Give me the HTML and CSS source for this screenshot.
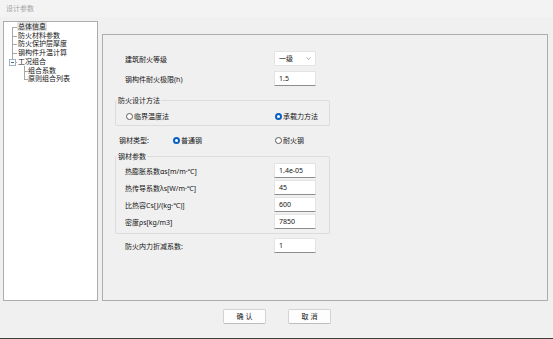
FILE: index.html
```html
<!DOCTYPE html>
<html lang="zh">
<head>
  <meta charset="UTF-8">
  <title>设计参数</title>
  <link rel="stylesheet" href="styles.css">
</head>
<body>
  <div class="window">
    <div class="title-bar">设计参数</div>

    <div class="content">
      <!-- 左侧树 -->
      <div class="tree">
        <ul class="tree-list">
          <li class="node"><span class="selected">总体信息</span></li>
          <li class="node">防火材料参数</li>
          <li class="node">防火保护层厚度</li>
          <li class="node">钢构件升温计算</li>
          <li class="node last"><span class="toggle"></span>工况组合
            <ul class="sub">
              <li class="node">组合系数</li>
              <li class="node">原则组合列表</li>
            </ul>
          </li>
        </ul>
      </div>

      <!-- 右侧参数 -->
      <div class="panel">
        <div class="row first">
          <span class="label">建筑耐火等级</span>
          <div class="field select">一级
            <svg width="5" height="3" viewBox="0 0 5 3"><path d="M0.5 0.5 L2.5 2.5 L4.5 0.5" fill="none" stroke="#8a8a8a" stroke-width="0.7"/></svg>
          </div>
        </div>
        <div class="row">
          <span class="label">钢构件耐火极限(h)</span>
          <div class="field">1.5</div>
        </div>

        <fieldset class="group method">
          <legend>防火设计方法</legend>
          <div class="radio-row">
            <label class="radio"><span class="dot"></span>临界温度法</label>
            <label class="radio"><span class="dot on"></span>承载力方法</label>
          </div>
        </fieldset>

        <div class="steel-type">
          <span class="type-label">钢材类型:</span>
          <label class="radio normal"><span class="dot on"></span>普通钢</label>
          <label class="radio"><span class="dot"></span>耐火钢</label>
        </div>

        <fieldset class="group params">
          <legend>钢材参数</legend>
          <div class="row">
            <span class="label">热膨胀系数αs[m/m·℃]</span>
            <div class="field">1.4e-05</div>
          </div>
          <div class="row">
            <span class="label">热传导系数λs[W/m·℃]</span>
            <div class="field">45</div>
          </div>
          <div class="row">
            <span class="label">比热容Cs[J/(kg·℃)]</span>
            <div class="field">600</div>
          </div>
          <div class="row">
            <span class="label">密度ρs[kg/m3]</span>
            <div class="field">7850</div>
          </div>
        </fieldset>

        <div class="row reduce">
          <span class="label">防火内力折减系数:</span>
          <div class="field">1</div>
        </div>
      </div>
    </div>

    <div class="footer">
      <button class="btn ok" type="button">确 认</button>
      <button class="btn" type="button">取 消</button>
    </div>
  </div>
</body>
</html>
```

FILE: styles.css
```css
html, body {
  margin: 0;
  padding: 0;
}
body {
  width: 553px;
  height: 339px;
  overflow: hidden;
  background: #f0f0f0;
  font-family: "Noto Sans", "Noto Sans CJK SC", sans-serif;
  font-size: 7px;
  color: #151515;
}
.window {
  height: 338px;
  border-bottom: 1px solid #3f3f3f;
  display: flex;
  flex-direction: column;
}
.title-bar {
  height: 17px;
  line-height: 17px;
  padding-left: 6px;
  color: #a3a3a3;
  background: #f3f3f3;
}
.content {
  display: flex;
  align-items: flex-end;
  padding: 4px 0 0 3px;
}

/* tree */
.tree {
  width: 95px;
  height: 280px;
  box-sizing: border-box;
  background: #fff;
  border: 1px solid #acacac;
}
.tree-list, .tree-list ul {
  list-style: none;
  margin: 0;
  padding: 0;
}
.tree-list {
  position: relative;
  padding-top: 1px;
}
.tree-list::before {
  content: '';
  position: absolute;
  left: 8px;
  top: 5px;
  height: 36px;
  border-left: 1px solid #a8a8a8;
}
.node {
  position: relative;
  padding-left: 14px;
  line-height: 8.7px;
  white-space: nowrap;
}
.node::before {
  content: '';
  position: absolute;
  left: 8px;
  top: 4px;
  width: 5px;
  border-top: 1px solid #a8a8a8;
}
.selected {
  background: #e4e4e4;
  padding: 0 1px;
  margin-left: -1px;
}
.toggle {
  position: absolute;
  left: 5px;
  top: 1px;
  width: 7px;
  height: 7px;
  box-sizing: border-box;
  border: 1px solid #9fb3c8;
  background: #fff;
  z-index: 1;
}
.toggle::after {
  content: '';
  position: absolute;
  left: 1px;
  top: 2px;
  width: 3px;
  border-top: 1px solid #4a6a8a;
}
.sub {
  position: relative;
  margin-left: -14px !important;
}
.sub::before {
  content: '';
  position: absolute;
  left: 20px;
  top: -1px;
  height: 14px;
  border-left: 1px solid #a8a8a8;
}
.sub .node {
  padding-left: 24px;
}
.sub .node::before {
  left: 20px;
  width: 4px;
}

/* right panel */
.panel {
  width: 446px;
  height: 267px;
  box-sizing: border-box;
  margin-left: 4px;
  border: 1px solid #adadad;
  padding-top: 16px;
}
.row {
  display: flex;
  align-items: center;
  height: 15px;
  padding-left: 22px;
}
.row + .row {
  margin-top: 5px;
}
.label {
  width: 149px;
  white-space: nowrap;
}
.field {
  width: 42px;
  height: 15px;
  box-sizing: border-box;
  background: #fff;
  border: 1px solid #e3e3e3;
  border-bottom-color: #8d8d8d;
  border-radius: 1px;
  padding-left: 4px;
  line-height: 13px;
}
.select {
  display: flex;
  align-items: center;
  justify-content: space-between;
  padding-right: 4px;
  border-color: #e3e3e3;
  border-bottom-color: #e3e3e3;
}

.group {
  margin: 10px 0 0 12px;
  width: 215px;
  min-width: 0;
  box-sizing: border-box;
  padding: 0;
  border: 1px solid #dcdcdc;
  border-radius: 2px;
}
.group legend {
  padding: 0 1px;
  margin-left: 1px;
  line-height: 9px;
}
.radio-row {
  display: grid;
  grid-template-columns: 149px auto;
  padding: 7px 0 4px 10px;
  line-height: 9px;
}
.radio {
  display: flex;
  align-items: center;
  gap: 1px;
  line-height: 9px;
}
.dot {
  width: 7px;
  height: 7px;
  box-sizing: border-box;
  border-radius: 50%;
  border: 1px solid #5c5c5c;
  background: #fff;
}
.dot.on {
  border: 2px solid #0a5fc4;
}

.steel-type {
  display: flex;
  align-items: center;
  margin-top: 10px;
  padding-left: 16px;
  line-height: 9px;
}
.type-label {
  width: 54px;
}
.radio.normal {
  width: 102px;
}

.params {
  margin-top: 7px;
  padding-bottom: 4px;
}
.params .row {
  padding-left: 9px;
}
.params .row:first-of-type {
  margin-top: 2px;
}
.params .row + .row {
  margin-top: 2px;
}
.row.reduce {
  margin-top: 4px;
}

/* buttons */
.footer {
  display: flex;
  justify-content: center;
  gap: 22px;
  margin-top: 8px;
  padding-left: 1px;
}
.btn {
  width: 43px;
  height: 15px;
  padding: 0;
  background: #fdfdfd;
  border: 1px solid #d2d2d2;
  border-bottom-color: #bdbdbd;
  border-radius: 2px;
  font-family: inherit;
  font-size: 7px;
  color: #151515;
  line-height: 13px;
}
```
